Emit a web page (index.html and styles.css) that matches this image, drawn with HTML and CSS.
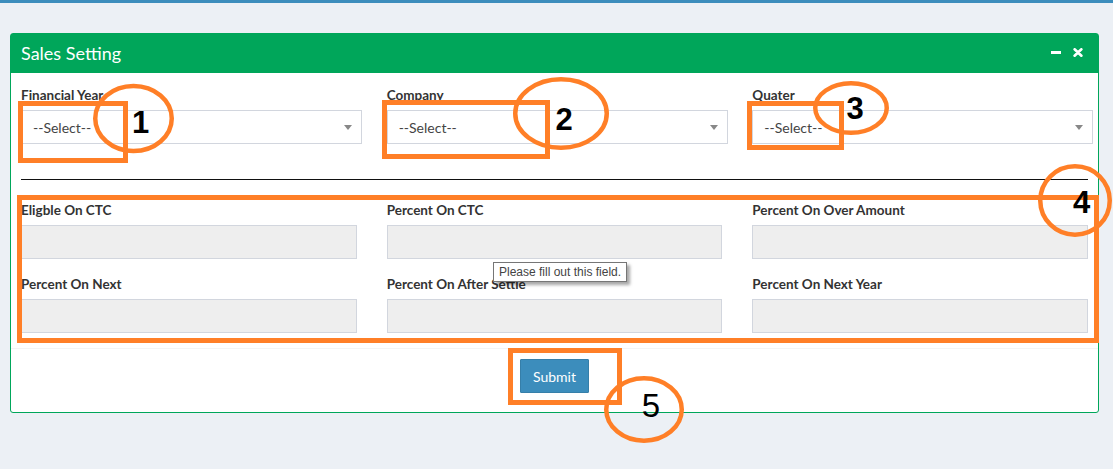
FILE: index.html
```html
<!DOCTYPE html>
<html lang="en">
<head>
<meta charset="utf-8">
<title>Sales Setting</title>
<link rel="stylesheet" href="styles.css">
</head>
<body>
<div class="topbar"></div>
<div class="content">
  <div class="box">
    <div class="box-header">
      <h3 class="box-title">Sales Setting</h3>
      <div class="box-tools">
        <svg class="tool-icon" width="10" height="3" viewBox="0 0 10 3"><rect x="0" y="0" width="10" height="3" fill="#fff"/></svg>
        <svg class="tool-icon" width="10" height="9" viewBox="0 0 10 9"><path d="M1.6 1.3 L8.4 7.7 M8.4 1.3 L1.6 7.7" stroke="#fff" stroke-width="2.6" stroke-linecap="round" fill="none"/></svg>
      </div>
    </div>
    <form class="box-body">
      <div class="grid">
        <div class="form-group">
          <label class="label">Financial Year</label>
          <div class="select"><span>--Select--</span><i class="caret"></i></div>
        </div>
        <div class="form-group">
          <label class="label">Company</label>
          <div class="select"><span>--Select--</span><i class="caret"></i></div>
        </div>
        <div class="form-group">
          <label class="label">Quater</label>
          <div class="select"><span>--Select--</span><i class="caret"></i></div>
        </div>
      </div>
      <hr class="divider">
      <div class="grid">
        <div class="form-group">
          <label class="label">Eligble On CTC</label>
          <div class="input"></div>
        </div>
        <div class="form-group">
          <label class="label">Percent On CTC</label>
          <div class="input"></div>
        </div>
        <div class="form-group">
          <label class="label">Percent On Over Amount</label>
          <div class="input"></div>
        </div>
        <div class="form-group">
          <label class="label">Percent On Next</label>
          <div class="input"></div>
        </div>
        <div class="form-group">
          <label class="label">Percent On After Settle</label>
          <div class="input"></div>
        </div>
        <div class="form-group">
          <label class="label">Percent On Next Year</label>
          <div class="input"></div>
        </div>
      </div>
    </form>
    <div class="box-footer">
      <button class="btn" type="button">Submit</button>
    </div>
  </div>
</div>

<div class="tooltip">Please fill out this field.</div>

<svg class="annotations" width="1113" height="469" viewBox="0 0 1113 469">
  <g fill="none" stroke="#ff7f27" stroke-width="5">
    <rect x="20.5" y="103.5" width="105" height="57"/>
    <rect x="384.5" y="102.5" width="163" height="54"/>
    <rect x="749.5" y="103.5" width="92" height="44"/>
    <rect x="19.5" y="197.5" width="1077" height="143"/>
    <rect x="510.5" y="350.5" width="109" height="52"/>
  </g>
  <g fill="none" stroke="#ff7f27" stroke-width="4.5">
    <ellipse cx="133.5" cy="118.5" rx="38.25" ry="32.5"/>
    <ellipse cx="561" cy="113.5" rx="45.75" ry="34.25"/>
    <ellipse cx="851" cy="108" rx="35.75" ry="24.75"/>
    <ellipse cx="1075" cy="200.5" rx="34.75" ry="34.25"/>
    <ellipse cx="644" cy="409.5" rx="37.75" ry="31.25"/>
  </g>
  <g class="num" text-anchor="middle">
    <text x="140.5" y="133">1</text>
    <text x="564" y="130">2</text>
    <text x="855" y="119">3</text>
    <text x="1081.5" y="213">4</text>
    <text class="num-light" x="651" y="417">5</text>
  </g>
</svg>
</body>
</html>
```

FILE: styles.css
```css
html, body {
  margin: 0;
  padding: 0;
  background: #ecf0f5;
  height: 100%;
}
body {
  font-family: Lato, "Open Sans", Arial, sans-serif;
  color: #333;
  font-size: 14px;
}
.topbar {
  height: 3px;
  background: #3c8dbc;
}
.content {
  padding: 30px 14px 0 10px;
}
.box {
  width: 1089px;
  box-sizing: border-box;
  background: #fff;
  border: 1px solid #00a65a;
  border-radius: 3px;
}
.box-header {
  height: 39px;
  background: #00a65a;
  display: flex;
  align-items: center;
  justify-content: space-between;
  padding: 0 15px 0 10px;
}
.box-title {
  margin: 0;
  font-size: 18px;
  font-weight: normal;
  color: #fff;
  line-height: 1;
  position: relative;
  top: -1px;
}
.box-tools {
  display: flex;
  align-items: center;
  gap: 12px;
  position: relative;
  top: -1px;
}
.tool-icon {
  display: block;
}
.box-body {
  display: block;
  padding: 12px 10px 0 10px;
  margin: 0;
}
.grid {
  display: grid;
  grid-template-columns: repeat(3, 1fr);
  column-gap: 30px;
}
.form-group {
  margin-bottom: 15px;
  min-width: 0;
}
.label {
  display: block;
  font-weight: bold;
  font-size: 13.5px;
  line-height: 20px;
  margin-bottom: 5px;
  color: #333;
  white-space: nowrap;
}
.select {
  width: calc(100% + 5.5px);
  height: 34px;
  box-sizing: border-box;
  border: 1px solid #d2d6de;
  background: #fff;
  display: flex;
  align-items: center;
  justify-content: space-between;
  padding: 0 9px 0 11px;
  color: #444;
  font-size: 14px;
}
.caret {
  display: block;
  width: 0;
  height: 0;
  border-left: 4px solid transparent;
  border-right: 4px solid transparent;
  border-top: 5px solid #888;
  margin-top: 1px;
}
.input {
  height: 34px;
  box-sizing: border-box;
  border: 1px solid #d2d6de;
  background: #eee;
}
.divider {
  margin: 20px 0;
  border: 0;
  border-top: 1px solid #111;
  height: 0;
}
.box-footer {
  border-top: 1px solid #f4f4f4;
  padding: 10px 10px 19px;
  display: flex;
  justify-content: center;
}
.btn {
  width: 69px;
  height: 34px;
  background: #3c8dbc;
  border: 1px solid #367fa9;
  border-radius: 1px;
  color: #fff;
  font-family: Lato, "Open Sans", Arial, sans-serif;
  font-size: 14px;
  padding: 0;
}
.tooltip {
  position: absolute;
  left: 493px;
  top: 262px;
  width: 134px;
  height: 20px;
  box-sizing: border-box;
  border: 1px solid #767676;
  background: #fff;
  box-shadow: 3px 3px 3px rgba(0, 0, 0, 0.35);
  font-family: "Liberation Sans", Arial, sans-serif;
  font-size: 12px;
  line-height: 18px;
  color: #444;
  padding-left: 5px;
  white-space: nowrap;
}
.annotations {
  position: absolute;
  left: 0;
  top: 0;
  pointer-events: none;
}
.num text {
  font-family: "Liberation Sans", Arial, sans-serif;
  font-weight: bold;
  font-size: 31px;
  fill: #000;
}
.num .num-light {
  font-weight: normal;
  font-size: 33px;
}
```
